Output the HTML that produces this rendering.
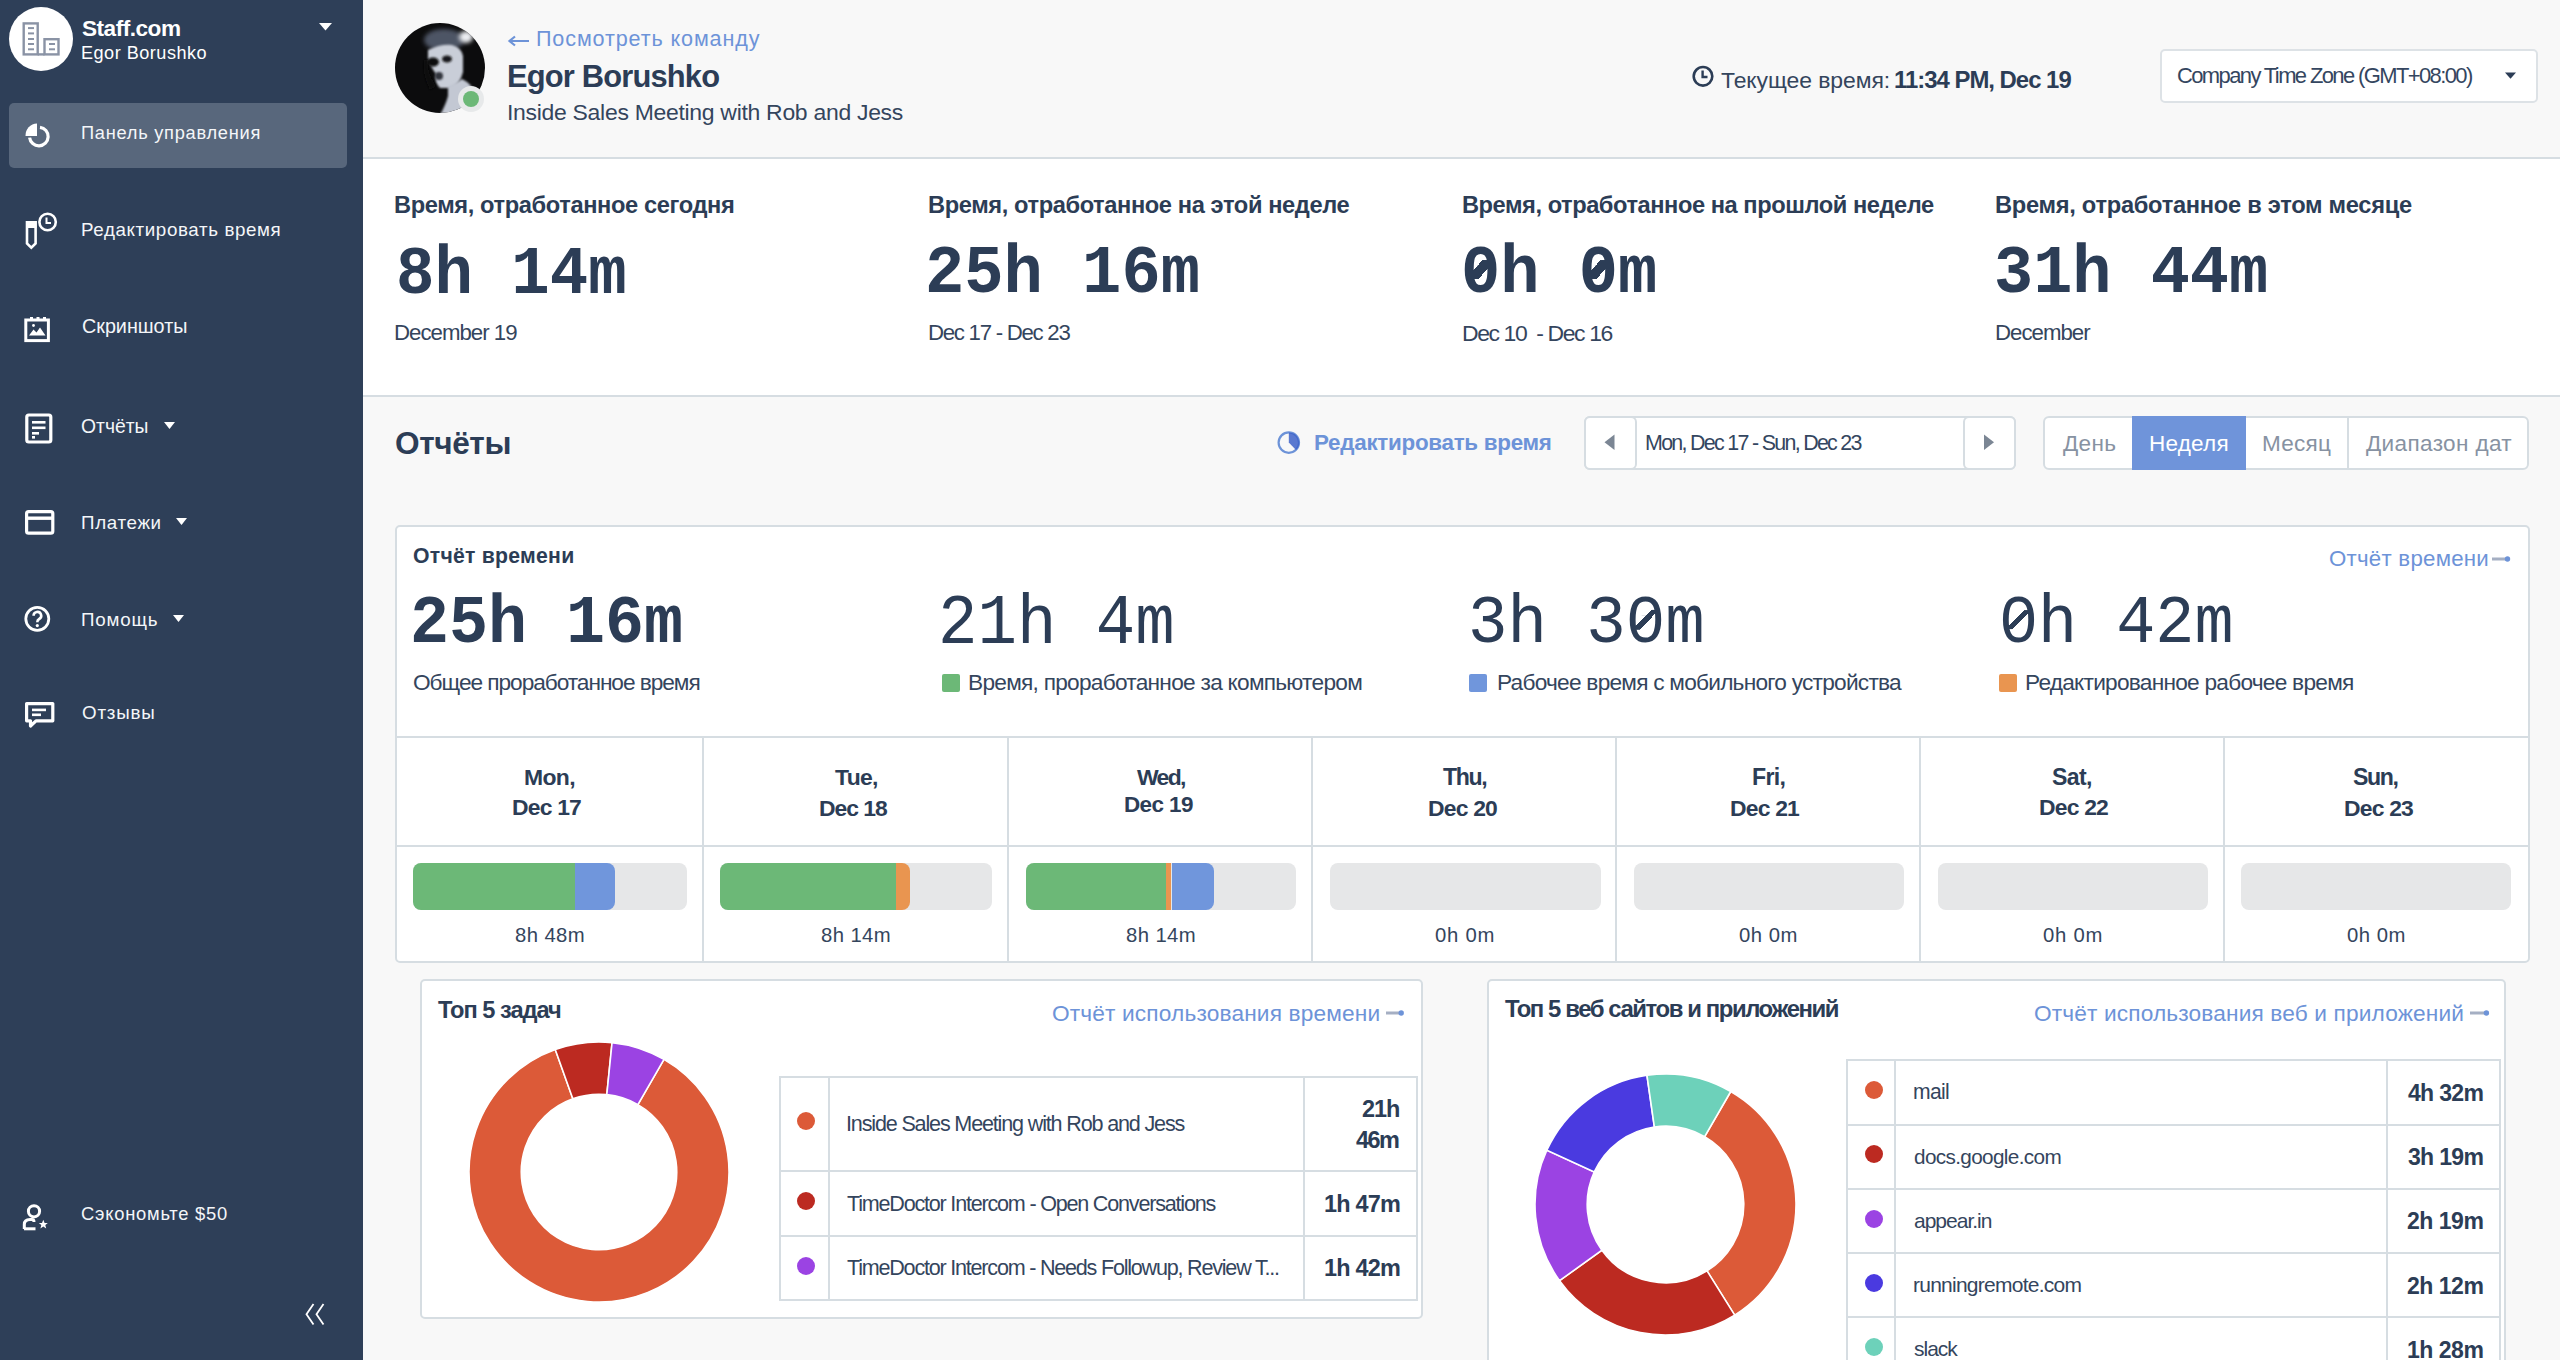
<!DOCTYPE html>
<html><head><meta charset="utf-8">
<style>
*{box-sizing:border-box;margin:0;padding:0}
html,body{width:2560px;height:1360px;overflow:hidden;background:#f8f8f8;font-family:"Liberation Sans",sans-serif;color:#2c3d56}
.a{position:absolute;white-space:nowrap;line-height:1}
.b{font-weight:700}
.mono{font-family:"Liberation Mono",monospace}
#sb{position:absolute;left:0;top:0;width:363px;height:1360px;background:#2e3f58}
.nav{color:#f4f6f9;font-size:18px}
.lnk{color:#6d93d8}
.card{position:absolute;background:#fff;border:2px solid #d6dde2;border-radius:5px}
.big{font-size:64px;transform:scaleY(1.16);transform-origin:0 0;letter-spacing:0}
.z{position:relative;display:inline-block}.z::before{content:"";position:absolute;left:37%;right:37%;top:36%;bottom:45%;background:#fff}.z::after{content:"";position:absolute;left:25%;right:25%;top:29%;bottom:43%;background:linear-gradient(to bottom right,transparent 40%,currentColor 40%,currentColor 60%,transparent 60%)}.b .z::after{left:29%;right:28%;background:linear-gradient(to bottom right,transparent 31%,currentColor 31%,currentColor 69%,transparent 69%)}
.hl{position:absolute;background:#d6dde2}
</style></head><body>
<!-- SIDEBAR -->
<div id="sb">
  <div style="position:absolute;left:9px;top:7px;width:64px;height:64px;border-radius:50%;background:#fff"></div>
  <svg style="position:absolute;left:0;top:0" width="80" height="80" viewBox="0 0 80 80">
    <g fill="none" stroke="#8a93a5" stroke-width="2.4">
      <rect x="23.7" y="23.4" width="14" height="31"/>
      <rect x="44.5" y="39.2" width="14" height="15.2"/>
      <line x1="37.7" y1="54.4" x2="44.5" y2="54.4"/>
    </g>
    <g stroke="#8a93a5" stroke-width="2">
      <line x1="28" y1="28.1" x2="34" y2="28.1"/><line x1="28" y1="33.4" x2="34" y2="33.4"/><line x1="28" y1="39" x2="34" y2="39"/><line x1="28" y1="44" x2="34" y2="44"/><line x1="28" y1="49.3" x2="34" y2="49.3"/>
      <line x1="49" y1="44" x2="55" y2="44"/><line x1="49" y1="49.3" x2="55" y2="49.3"/>
    </g>
  </svg>
  <div class="a b" id="t_staff" style="left:82.00px;top:18.26px;font-size:22.61px;color:#fff;letter-spacing:-0.500px">Staff.com</div>
  <div class="a" id="t_egor" style="left:81.00px;top:44.31px;font-size:18.09px;color:#fff;letter-spacing:0.500px">Egor Borushko</div>
  <svg style="position:absolute;left:319px;top:23px" width="13" height="8"><path d="M0 0H13L6.5 7.5Z" fill="#fff"/></svg>

  <div style="position:absolute;left:9px;top:103px;width:338px;height:65px;border-radius:5px;background:#58677c"></div>
  <!-- dashboard icon -->
  <svg style="position:absolute;left:24px;top:122px" width="28" height="28" viewBox="0 0 28 28">
    <path d="M1.5 14 A 12 12 0 0 1 13 1.5 V 14 Z" fill="#fff"/>
    <path d="M16 5.3 A 9.3 9.3 0 1 1 5.6 15.6" fill="none" stroke="#fff" stroke-width="3.2"/>
  </svg>
  <div class="a nav" id="n1" style="left:81.00px;top:123.81px;font-size:18.23px;letter-spacing:0.746px">Панель управления</div>

  <!-- edit time icon -->
  <svg style="position:absolute;left:22px;top:208px" width="40" height="44" viewBox="0 0 40 44">
    <path d="M5 14.3 H13.6 V35.5 L9.3 39.6 L5 35.5 Z" fill="none" stroke="#fff" stroke-width="2.6"/>
    <rect x="4" y="13" width="10.6" height="7" fill="#fff"/>
    <circle cx="25.6" cy="14" r="8.2" fill="none" stroke="#fff" stroke-width="2.6"/>
    <path d="M24.5 9.5 V15 H29" fill="none" stroke="#fff" stroke-width="2"/>
  </svg>
  <div class="a nav" id="n2" style="left:81.00px;top:220.91px;font-size:18.78px;letter-spacing:0.610px">Редактировать время</div>

  <!-- screenshots icon -->
  <svg style="position:absolute;left:24px;top:316px" width="28" height="28" viewBox="0 0 28 28">
    <rect x="1.8" y="4" width="22.6" height="20.6" fill="none" stroke="#fff" stroke-width="3"/>
    <rect x="6" y="1" width="3" height="4" fill="#fff"/><rect x="12.5" y="1" width="3" height="4" fill="#fff"/><rect x="19" y="1" width="3" height="4" fill="#fff"/>
    <path d="M5 19.5 L9.5 13.5 L12.5 16.5 L16 11.5 L21.5 19.5 Z" fill="#fff"/>
    <circle cx="9.5" cy="9.5" r="1.4" fill="#fff"/>
  </svg>
  <div class="a nav" id="n3" style="left:82.00px;top:317.01px;font-size:19.76px;letter-spacing:-0.010px">Скриншоты</div>

  <!-- reports icon -->
  <svg style="position:absolute;left:24px;top:412px" width="30" height="32" viewBox="0 0 30 32">
    <rect x="2.8" y="3" width="24" height="27" rx="2" fill="none" stroke="#fff" stroke-width="3.2"/>
    <rect x="8" y="9" width="13.5" height="2.6" fill="#fff"/><rect x="8" y="14.5" width="13.5" height="2.6" fill="#fff"/><rect x="8" y="20" width="7" height="2.6" fill="#fff"/><rect x="8" y="24" width="3" height="2.6" fill="#fff"/>
  </svg>
  <div class="a nav" id="n4" style="left:81.00px;top:417.21px;font-size:19.34px;letter-spacing:-0.000px">Отчёты</div>
  <svg style="position:absolute;left:164px;top:422px" width="12" height="8"><path d="M0 0H11L5.5 7Z" fill="#fff"/></svg>

  <!-- payments icon -->
  <svg style="position:absolute;left:24px;top:508px" width="32" height="28" viewBox="0 0 32 28">
    <rect x="2.6" y="3.6" width="26.2" height="21.6" rx="2" fill="none" stroke="#fff" stroke-width="3.2"/>
    <rect x="2.6" y="8.5" width="26.2" height="3.4" fill="#fff"/>
  </svg>
  <div class="a nav" id="n5" style="left:81.00px;top:514.30px;font-size:18.78px;letter-spacing:0.662px">Платежи</div>
  <svg style="position:absolute;left:176px;top:518px" width="12" height="8"><path d="M0 0H11L5.5 7Z" fill="#fff"/></svg>

  <!-- help icon -->
  <svg style="position:absolute;left:23px;top:604px" width="30" height="30" viewBox="0 0 30 30">
    <circle cx="14.3" cy="14.8" r="11.5" fill="none" stroke="#fff" stroke-width="2.8"/>
    <path d="M10.6 11.8 A3.8 3.8 0 1 1 16.2 15 Q14.3 16 14.3 18.3" fill="none" stroke="#fff" stroke-width="2.6"/>
    <circle cx="14.3" cy="21.6" r="1.6" fill="#fff"/>
  </svg>
  <div class="a nav" id="n6" style="left:81.00px;top:611.41px;font-size:18.78px;letter-spacing:0.800px">Помощь</div>
  <svg style="position:absolute;left:173px;top:615px" width="12" height="8"><path d="M0 0H11L5.5 7Z" fill="#fff"/></svg>

  <!-- feedback icon -->
  <svg style="position:absolute;left:24px;top:700px" width="32" height="32" viewBox="0 0 32 32">
    <path d="M2.6 3.6 H28.8 V20.8 H12 L6.5 26 V20.8 H2.6 Z" fill="none" stroke="#fff" stroke-width="3.2" stroke-linejoin="round"/>
    <rect x="8" y="8.6" width="14" height="2.6" fill="#fff"/><rect x="8" y="13.5" width="9" height="2.6" fill="#fff"/>
  </svg>
  <div class="a nav" id="n7" style="left:82.00px;top:703.61px;font-size:18.78px;letter-spacing:0.800px">Отзывы</div>

  <!-- referral -->
  <svg style="position:absolute;left:20px;top:1202px" width="32" height="32" viewBox="0 0 32 32">
    <circle cx="14" cy="9.3" r="5.6" fill="none" stroke="#fff" stroke-width="3"/>
    <path d="M4.3 27 V22.5 Q4.3 17.5 10 17.5 H12 Q14 17.5 14 20" fill="none" stroke="#fff" stroke-width="3"/>
    <line x1="4" y1="26.8" x2="15.5" y2="26.8" stroke="#fff" stroke-width="3"/>
    <path d="M23.3 17.8 L24.6 21 L27.8 21.1 L25.3 23.1 L26.2 26.4 L23.3 24.5 L20.4 26.4 L21.3 23.1 L18.8 21.1 L22 21 Z" fill="#fff"/>
  </svg>
  <div class="a nav" id="n8" style="left:81.00px;top:1205.41px;font-size:18.37px;letter-spacing:0.766px">Сэкономьте $50</div>
  <svg style="position:absolute;left:300px;top:1300px" width="30" height="30" viewBox="0 0 30 30">
    <path d="M13.5 4 L6.5 14.2 L13.5 24.5 M23.5 4 L16.5 14.2 L23.5 24.5" fill="none" stroke="#fff" stroke-width="1.8"/>
  </svg>
</div>

<!-- HEADER -->
<div style="position:absolute;left:363px;top:0;width:2197px;height:157px;background:#f8f8f8"></div>
<div class="hl" style="left:363px;top:157px;width:2197px;height:2px"></div>
<div style="position:absolute;left:363px;top:159px;width:2197px;height:236px;background:#fff"></div>
<div class="hl" style="left:363px;top:395px;width:2197px;height:2px"></div>


<!-- HEADER CONTENT -->
<svg style="position:absolute;left:392px;top:20px" width="110" height="100" viewBox="392 20 110 100">
  <defs><clipPath id="av"><circle cx="440" cy="68" r="45"/></clipPath>
  <filter id="bl2" x="-50%" y="-50%" width="200%" height="200%"><feGaussianBlur stdDeviation="2"/></filter>
  <filter id="bl1" x="-50%" y="-50%" width="200%" height="200%"><feGaussianBlur stdDeviation="1.2"/></filter></defs>
  <circle cx="440" cy="68" r="45" fill="#0c0c0d"/>
  <g clip-path="url(#av)">
    <ellipse cx="444" cy="40" rx="20" ry="11" fill="#4d5465" filter="url(#bl2)"/>
    <path d="M428 50 Q440 44 452 45 Q462 48 463 56 L463 72 Q460 84 452 88 L440 88 Q434 82 436 74 Q430 66 428 58 Z" fill="#c9ced8" filter="url(#bl1)"/>
    <path d="M448 86 Q458 82 462 79 Q472 84 474 92 L474 115 L440 115 Q446 104 448 96 Z" fill="#c3c8d3" filter="url(#bl1)"/>
    <ellipse cx="466" cy="37" rx="7" ry="6" fill="#eceef2" filter="url(#bl2)"/>
    <ellipse cx="433" cy="62" rx="6" ry="4.5" fill="#0c0c0d" filter="url(#bl1)"/>
    <ellipse cx="447" cy="59" rx="5" ry="3.5" fill="#16181d" filter="url(#bl1)"/>
    <ellipse cx="439" cy="76" rx="4" ry="4" fill="#30343d" filter="url(#bl1)"/>
    <path d="M428 60 Q426 72 436 86 L430 90 Q422 74 424 60 Z" fill="#0c0c0d" filter="url(#bl1)"/>
  </g>
  <circle cx="471" cy="99" r="13" fill="#e7e9ea"/>
  <circle cx="471" cy="99" r="8" fill="#6cb877"/>
</svg>
<svg style="position:absolute;left:507px;top:34px" width="24" height="14" viewBox="0 0 24 14"><path d="M22 7H3M8 2.5L2.5 7L8 11.5" fill="none" stroke="#6d93d8" stroke-width="2.2"/></svg>
<div class="a lnk" id="h_back" style="left:536.00px;top:28.30px;font-size:21.57px;letter-spacing:0.875px">Посмотреть команду</div>
<div class="a b" id="h_name" style="left:507.00px;top:62.41px;font-size:30.89px;letter-spacing:-0.834px">Egor Borushko</div>
<div class="a" id="h_task" style="left:507.00px;top:100.90px;font-size:22.96px;letter-spacing:-0.290px;color:#34455d">Inside Sales Meeting with Rob and Jess</div>

<svg style="position:absolute;left:1691px;top:64px" width="25" height="25" viewBox="0 0 25 25"><circle cx="12" cy="12.3" r="9.3" fill="none" stroke="#2c3d56" stroke-width="2.6"/><path d="M11.6 6.5V13H16.5" fill="none" stroke="#2c3d56" stroke-width="2.4"/></svg>
<div class="a" id="h_time1" style="left:1721.00px;top:68.51px;font-size:22.96px;letter-spacing:-0.077px;color:#34455d">Текущее время:</div>
<div class="a b" id="h_time2" style="left:1894.00px;top:67.51px;font-size:23.91px;letter-spacing:-1.001px">11:34 PM, Dec 19</div>

<div style="position:absolute;left:2160px;top:49px;width:378px;height:54px;background:#fff;border:2px solid #dde2e6;border-radius:5px"></div>
<div class="a" id="h_tz" style="left:2177.00px;top:65.30px;font-size:21.98px;color:#344660;letter-spacing:-1.608px">Company Time Zone (GMT+08:00)</div>
<svg style="position:absolute;left:2505px;top:71.5px" width="12" height="8"><path d="M0 0.5H11L5.5 6.8Z" fill="#2c3d56"/></svg>

<!-- STATS -->
<div class="a b" id="s1t" style="left:394.00px;top:194.21px;font-size:23.65px;letter-spacing:-0.384px">Время, отработанное сегодня</div>
<div class="a b" id="s2t" style="left:928.00px;top:194.21px;font-size:23.65px;letter-spacing:-0.394px">Время, отработанное на этой неделе</div>
<div class="a b" id="s3t" style="left:1462.00px;top:194.01px;font-size:23.65px;letter-spacing:-0.448px">Время, отработанное на прошлой неделе</div>
<div class="a b" id="s4t" style="left:1995.00px;top:194.01px;font-size:23.65px;letter-spacing:-0.276px">Время, отработанное в этом месяце</div>
<div class="a mono b big" id="s1n" style="left:396.00px;top:240.40px;font-size:64.04px;transform:scaleY(1.0766);transform-origin:0 0">8h 14m</div>
<div class="a mono b big" id="s2n" style="left:925.00px;top:240.40px;font-size:65.46px;transform:scaleY(1.0524);transform-origin:0 0">25h 16m</div>
<div class="a mono b big" id="s3n" style="left:1461.00px;top:240.40px;font-size:65.35px;transform:scaleY(1.0538);transform-origin:0 0"><span class="z">0</span>h <span class="z">0</span>m</div>
<div class="a mono b big" id="s4n" style="left:1994.00px;top:240.40px;font-size:65.25px;transform:scaleY(1.0566);transform-origin:0 0">31h 44m</div>
<div class="a" id="s1d" style="left:394.00px;top:322.00px;font-size:22.26px;letter-spacing:-1.000px;color:#34455d">December 19</div>
<div class="a" id="s2d" style="left:928.00px;top:322.00px;font-size:22.26px;letter-spacing:-1.286px;color:#34455d">Dec 17 - Dec 23</div>
<div class="a" id="s3d" style="left:1462.00px;top:321.51px;font-size:22.96px;letter-spacing:-1.396px;color:#34455d">Dec 10&nbsp; - Dec 16</div>
<div class="a" id="s4d" style="left:1995.00px;top:322.00px;font-size:22.26px;letter-spacing:-0.996px;color:#34455d">December</div>

<!-- REPORTS TOOLBAR -->
<div class="a b" id="r_title" style="left:395.00px;top:428.01px;font-size:31.58px;letter-spacing:-0.400px">Отчёты</div>
<svg style="position:absolute;left:1276px;top:430px" width="26" height="26" viewBox="0 0 26 26">
  <circle cx="12.8" cy="12.6" r="10.2" fill="none" stroke="#6d93d8" stroke-width="2.2"/>
  <path d="M12.8 2.4 A10.2 10.2 0 0 1 20 20 L12.8 12.6 Z" fill="#3e63c9" opacity="0.85"/>
</svg>
<div class="a b lnk" id="r_edit" style="left:1314.00px;top:432.31px;font-size:22.40px;letter-spacing:-0.279px">Редактировать время</div>

<div style="position:absolute;left:1584px;top:416px;width:432px;height:54px;background:#fff;border:2px solid #d6dde2;border-radius:6px"></div>
<div style="position:absolute;left:1584px;top:416px;width:53px;height:54px;background:#fff;border:2px solid #d6dde2;border-radius:6px"></div>
<div style="position:absolute;left:1963px;top:416px;width:53px;height:54px;background:#fff;border:2px solid #d6dde2;border-radius:6px"></div>
<svg style="position:absolute;left:1604px;top:434px" width="12" height="17"><path d="M10.5 0.5V16L0.5 8.25Z" fill="#7b8694"/></svg>
<svg style="position:absolute;left:1983px;top:434px" width="12" height="17"><path d="M1 0.5V16L11 8.25Z" fill="#7b8694"/></svg>
<div class="a" id="r_date" style="left:1645.00px;top:433.01px;font-size:21.43px;color:#344660;letter-spacing:-1.704px">Mon, Dec 17 - Sun, Dec 23</div>

<div style="position:absolute;left:2043px;top:416px;width:486px;height:54px;background:#fff;border:2px solid #d6dde2;border-radius:6px"></div>
<div style="position:absolute;left:2132px;top:416px;width:114px;height:54px;background:#6f94da"></div>
<div class="hl" style="left:2347px;top:418px;width:2px;height:50px"></div>
<div class="a seg" id="seg1" style="left:2063.00px;top:432.60px;font-size:22.54px;color:#8792a2;letter-spacing:0.332px">День</div>
<div class="a seg" id="seg2" style="left:2149.00px;top:432.60px;font-size:22.54px;color:#fff;letter-spacing:0.200px">Неделя</div>
<div class="a seg" id="seg3" style="left:2262.00px;top:432.60px;font-size:22.54px;color:#8792a2;letter-spacing:0.250px">Месяц</div>
<div class="a seg" id="seg4" style="left:2366.00px;top:432.60px;font-size:22.54px;color:#8792a2;letter-spacing:0.365px">Диапазон дат</div>

<!-- TIME REPORT CARD -->
<div class="card" style="left:395px;top:525px;width:2135px;height:438px"></div>
<div class="a b" id="c_title" style="left:413.00px;top:544.75px;font-size:21.22px;letter-spacing:0.250px">Отчёт времени</div>
<div class="a lnk" id="c_link" style="left:2329.00px;top:548.41px;font-size:22.26px;letter-spacing:0.248px">Отчёт времени</div>
<svg style="position:absolute;left:2490.2px;top:553.5px" width="22.0" height="10"><path d="M2 5H17.0" stroke="#a5afc3" stroke-width="3"/><circle cx="17.5" cy="5" r="2.7" fill="#6d93d8"/></svg>
<div class="a mono b big" id="c1n" style="left:410.00px;top:590.00px;font-size:65.01px;transform:scaleY(1.0595);transform-origin:0 0">25h 16m</div>
<div class="a mono big" id="c2n" style="left:938.00px;top:590.00px;font-size:65.73px;transform:scaleY(1.0669);transform-origin:0 0">21h 4m</div>
<div class="a mono big" id="c3n" style="left:1468.00px;top:590.00px;font-size:65.76px;transform:scaleY(1.0474);transform-origin:0 0">3h 3<span class="z">0</span>m</div>
<div class="a mono big" id="c4n" style="left:1999.00px;top:590.00px;font-size:65.15px;transform:scaleY(1.0567);transform-origin:0 0"><span class="z">0</span>h 42m</div>
<div class="a" id="l1" style="left:413.00px;top:671.30px;font-size:22.68px;letter-spacing:-1.045px;color:#34455d">Общее проработанное время</div>
<div style="position:absolute;left:942px;top:674px;width:18px;height:18px;border-radius:2px;background:#6cb877"></div>
<div class="a" id="l2" style="left:968.00px;top:671.30px;font-size:22.68px;letter-spacing:-0.735px;color:#34455d">Время, проработанное за компьютером</div>
<div style="position:absolute;left:1469px;top:674px;width:18px;height:18px;border-radius:2px;background:#7096dc"></div>
<div class="a" id="l3" style="left:1497.00px;top:671.30px;font-size:22.68px;letter-spacing:-0.758px;color:#34455d">Рабочее время с мобильного устройства</div>
<div style="position:absolute;left:1999px;top:674px;width:18px;height:18px;border-radius:2px;background:#e99550"></div>
<div class="a" id="l4" style="left:2025.00px;top:671.30px;font-size:22.68px;letter-spacing:-0.750px;color:#34455d">Редактированное рабочее время</div>

<!-- days grid -->
<div class="hl" style="left:397px;top:736px;width:2131px;height:2px"></div>
<div class="hl" style="left:397px;top:845px;width:2131px;height:2px"></div>
<div class="hl" style="left:702px;top:738px;width:2px;height:223px"></div>
<div class="hl" style="left:1007px;top:738px;width:2px;height:223px"></div>
<div class="hl" style="left:1311px;top:738px;width:2px;height:223px"></div>
<div class="hl" style="left:1615px;top:738px;width:2px;height:223px"></div>
<div class="hl" style="left:1919px;top:738px;width:2px;height:223px"></div>
<div class="hl" style="left:2223px;top:738px;width:2px;height:223px"></div>
<div class="a b" id="d1a" style="left:524.00px;top:766.11px;font-size:22.96px;letter-spacing:-0.668px">Mon,</div>
<div class="a b" id="d1b" style="left:512.00px;top:795.51px;font-size:22.90px;letter-spacing:-0.800px">Dec 17</div>
<div class="a" id="dv1" style="left:515.00px;top:925.30px;font-size:20.29px;letter-spacing:0.400px;color:#34455d">8h 48m</div>
<div class="a b" id="d2a" style="left:835.00px;top:766.11px;font-size:22.96px;letter-spacing:-0.668px">Tue,</div>
<div class="a b" id="d2b" style="left:819.00px;top:796.60px;font-size:22.90px;letter-spacing:-1.000px">Dec 18</div>
<div class="a" id="dv2" style="left:821.00px;top:925.30px;font-size:20.29px;letter-spacing:0.400px;color:#34455d">8h 14m</div>
<div class="a b" id="d3a" style="left:1137.00px;top:766.11px;font-size:22.96px;letter-spacing:-1.670px">Wed,</div>
<div class="a b" id="d3b" style="left:1124.00px;top:793.50px;font-size:22.46px;letter-spacing:-0.600px">Dec 19</div>
<div class="a" id="dv3" style="left:1126.00px;top:925.30px;font-size:20.29px;letter-spacing:0.400px;color:#34455d">8h 14m</div>
<div class="a b" id="d4a" style="left:1443.00px;top:766.01px;font-size:23.10px;letter-spacing:-1.332px">Thu,</div>
<div class="a b" id="d4b" style="left:1428.00px;top:797.10px;font-size:22.90px;letter-spacing:-0.800px">Dec 20</div>
<div class="a" id="dv4" style="left:1435.00px;top:924.61px;font-size:20.29px;letter-spacing:0.750px;color:#34455d">0h 0m</div>
<div class="a b" id="d5a" style="left:1752.00px;top:766.01px;font-size:23.10px;letter-spacing:-0.665px">Fri,</div>
<div class="a b" id="d5b" style="left:1730.00px;top:797.10px;font-size:22.90px;letter-spacing:-0.800px">Dec 21</div>
<div class="a" id="dv5" style="left:1739.00px;top:924.61px;font-size:20.29px;letter-spacing:0.500px;color:#34455d">0h 0m</div>
<div class="a b" id="d6a" style="left:2052.00px;top:766.01px;font-size:23.10px;letter-spacing:-0.665px">Sat,</div>
<div class="a b" id="d6b" style="left:2039.00px;top:795.60px;font-size:22.90px;letter-spacing:-0.800px">Dec 22</div>
<div class="a" id="dv6" style="left:2043.00px;top:924.61px;font-size:20.29px;letter-spacing:0.750px;color:#34455d">0h 0m</div>
<div class="a b" id="d7a" style="left:2353.00px;top:766.01px;font-size:23.10px;letter-spacing:-1.331px">Sun,</div>
<div class="a b" id="d7b" style="left:2344.00px;top:797.10px;font-size:22.90px;letter-spacing:-0.800px">Dec 23</div>
<div class="a" id="dv7" style="left:2347.00px;top:924.61px;font-size:20.29px;letter-spacing:0.500px;color:#34455d">0h 0m</div>
<div style="position:absolute;left:413px;top:863px;width:274px;height:47px;border-radius:8px;background:#e6e7e8;overflow:hidden"><div style="position:absolute;left:0.0px;top:0;width:161.9px;height:47px;background:#6cb877"></div><div style="position:absolute;left:161.9px;top:0;width:40.1px;height:47px;background:#7096dc;border-radius:0 8px 8px 0"></div></div>
<div style="position:absolute;left:720px;top:863px;width:272px;height:47px;border-radius:8px;background:#e6e7e8;overflow:hidden"><div style="position:absolute;left:0.0px;top:0;width:176.2px;height:47px;background:#6cb877"></div><div style="position:absolute;left:176.2px;top:0;width:13.6px;height:47px;background:#e99550;border-radius:0 8px 8px 0"></div></div>
<div style="position:absolute;left:1026px;top:863px;width:270px;height:47px;border-radius:8px;background:#e6e7e8;overflow:hidden"><div style="position:absolute;left:0.0px;top:0;width:139.6px;height:47px;background:#6cb877"></div><div style="position:absolute;left:139.6px;top:0;width:5.9px;height:47px;background:#e99550"></div><div style="position:absolute;left:145.5px;top:0;width:42.2px;height:47px;background:#7096dc;border-radius:0 8px 8px 0"></div></div>
<div style="position:absolute;left:1330px;top:863px;width:271px;height:47px;border-radius:8px;background:#e6e7e8;overflow:hidden"></div>
<div style="position:absolute;left:1634px;top:863px;width:270px;height:47px;border-radius:8px;background:#e6e7e8;overflow:hidden"></div>
<div style="position:absolute;left:1938px;top:863px;width:270px;height:47px;border-radius:8px;background:#e6e7e8;overflow:hidden"></div>
<div style="position:absolute;left:2241px;top:863px;width:270px;height:47px;border-radius:8px;background:#e6e7e8;overflow:hidden"></div>


<!-- TASKS CARD -->
<div class="card" style="left:420px;top:979px;width:1003px;height:340px"></div>
<div class="a b" id="k_title" style="left:438.00px;top:998.51px;font-size:23.65px;letter-spacing:-1.000px">Топ 5 задач</div>
<div class="a lnk" id="k_link" style="left:1052.00px;top:1001.80px;font-size:22.68px;letter-spacing:0.155px">Отчёт использования времени</div>
<svg style="position:absolute;left:1383.5px;top:1007.8px" width="21.7" height="10"><path d="M2 5H16.7" stroke="#a5afc3" stroke-width="3"/><circle cx="17.2" cy="5" r="2.7" fill="#6d93d8"/></svg>
<svg style="position:absolute;left:464.5px;top:1037.9px" width="268" height="268" viewBox="464.50 1037.90 268.20 268.20"><path d="M663.65 1059.33 A130.1 130.1 0 1 1 554.82 1049.49 L572.42 1098.74 A77.8 77.8 0 1 0 637.50 1104.62 Z" fill="#dc5a38" stroke="#fff" stroke-width="1.6" stroke-linejoin="miter"/><path d="M554.82 1049.49 A130.1 130.1 0 0 1 611.66 1042.56 L606.41 1094.59 A77.8 77.8 0 0 0 572.42 1098.74 Z" fill="#bc2a21" stroke="#fff" stroke-width="1.6" stroke-linejoin="miter"/><path d="M611.66 1042.56 A130.1 130.1 0 0 1 663.65 1059.33 L637.50 1104.62 A77.8 77.8 0 0 0 606.41 1094.59 Z" fill="#9b43e3" stroke="#fff" stroke-width="1.6" stroke-linejoin="miter"/></svg>

<div style="position:absolute;left:779px;top:1076px;width:639px;height:225px;border:2px solid #d6dde2"></div>
<div class="hl" style="left:828px;top:1078px;width:2px;height:221px"></div>
<div class="hl" style="left:1303px;top:1078px;width:2px;height:221px"></div>
<div class="hl" style="left:781px;top:1170px;width:635px;height:2px"></div>
<div class="hl" style="left:781px;top:1235px;width:635px;height:2px"></div>
<div style="position:absolute;left:797px;top:1112px;width:18px;height:18px;border-radius:50%;background:#dc5a38"></div>
<div style="position:absolute;left:797px;top:1192px;width:18px;height:18px;border-radius:50%;background:#bc2a21"></div>
<div style="position:absolute;left:797px;top:1257px;width:18px;height:18px;border-radius:50%;background:#9b43e3"></div>
<div class="a" id="k_r1" style="left:846.00px;top:1112.51px;font-size:21.57px;letter-spacing:-1.163px;color:#34455d">Inside Sales Meeting with Rob and Jess</div>
<div class="a b" id="k_r1a" style="left:1362.00px;top:1098.01px;font-size:23.48px;letter-spacing:-1.000px">21h</div>
<div class="a b" id="k_r1b" style="left:1356.00px;top:1128.51px;font-size:23.48px;letter-spacing:-1.500px">46m</div>
<div class="a" id="k_r2" style="left:847.00px;top:1192.51px;font-size:21.57px;letter-spacing:-1.205px;color:#34455d">TimeDoctor Intercom - Open Conversations</div>
<div class="a b" id="k_r2t" style="left:1324.00px;top:1192.71px;font-size:23.48px;letter-spacing:-0.800px">1h 47m</div>
<div class="a" id="k_r3" style="left:847.00px;top:1256.71px;font-size:21.57px;letter-spacing:-1.215px;color:#34455d">TimeDoctor Intercom - Needs Followup, Review T...</div>
<div class="a b" id="k_r3t" style="left:1324.00px;top:1256.51px;font-size:23.48px;letter-spacing:-0.800px">1h 42m</div>

<!-- SITES CARD -->
<div class="card" style="left:1487px;top:979px;width:1019px;height:400px"></div>
<div class="a b" id="w_title" style="left:1505.00px;top:997.30px;font-size:23.91px;letter-spacing:-1.424px">Топ 5 веб сайтов и приложений</div>
<div class="a lnk" id="w_link" style="left:2034.00px;top:1001.80px;font-size:22.68px;letter-spacing:0.144px">Отчёт использования веб и приложений</div>
<svg style="position:absolute;left:2467.5px;top:1007.5px" width="22.9" height="10"><path d="M2 5H17.9" stroke="#a5afc3" stroke-width="3"/><circle cx="18.4" cy="5" r="2.7" fill="#6d93d8"/></svg>
<svg style="position:absolute;left:1531.4px;top:1069.5px" width="269" height="269" viewBox="1531.40 1069.50 269.00 269.00"><path d="M1731.15 1090.98 A130.5 130.5 0 0 1 1735.10 1314.64 L1707.42 1270.38 A78.3 78.3 0 0 0 1705.05 1136.19 Z" fill="#dc5a38" stroke="#fff" stroke-width="1.6" stroke-linejoin="miter"/><path d="M1735.10 1314.64 A130.5 130.5 0 0 1 1559.94 1280.17 L1602.32 1249.70 A78.3 78.3 0 0 0 1707.42 1270.38 Z" fill="#bc2a21" stroke="#fff" stroke-width="1.6" stroke-linejoin="miter"/><path d="M1559.94 1280.17 A130.5 130.5 0 0 1 1547.22 1149.72 L1594.69 1171.43 A78.3 78.3 0 0 0 1602.32 1249.70 Z" fill="#9b43e3" stroke="#fff" stroke-width="1.6" stroke-linejoin="miter"/><path d="M1547.22 1149.72 A130.5 130.5 0 0 1 1647.36 1074.82 L1654.77 1126.49 A78.3 78.3 0 0 0 1594.69 1171.43 Z" fill="#4a3ae0" stroke="#fff" stroke-width="1.6" stroke-linejoin="miter"/><path d="M1647.36 1074.82 A130.5 130.5 0 0 1 1731.15 1090.98 L1705.05 1136.19 A78.3 78.3 0 0 0 1654.77 1126.49 Z" fill="#6dd1ba" stroke="#fff" stroke-width="1.6" stroke-linejoin="miter"/></svg>

<div style="position:absolute;left:1846px;top:1059px;width:655px;height:330px;border:2px solid #d6dde2"></div>
<div class="hl" style="left:1894px;top:1061px;width:2px;height:310px"></div>
<div class="hl" style="left:2386px;top:1061px;width:2px;height:310px"></div>
<div style="position:absolute;left:1864.5px;top:1081.0px;width:18px;height:18px;border-radius:50%;background:#dc5a38"></div>
<div class="a" id="w_r1" style="left:1913.00px;top:1081.21px;font-size:21.15px;letter-spacing:-0.665px;color:#34455d">mail</div>
<div class="a b" id="w_t1" style="left:2407.90px;top:1081.91px;font-size:23.04px;letter-spacing:-0.680px">4h 32m</div>
<div class="hl" style="left:1848px;top:1124px;width:651px;height:2px"></div>
<div style="position:absolute;left:1864.5px;top:1145.2px;width:18px;height:18px;border-radius:50%;background:#bc2a21"></div>
<div class="a" id="w_r2" style="left:1914.00px;top:1146.81px;font-size:20.73px;letter-spacing:-0.642px;color:#34455d">docs.google.com</div>
<div class="a b" id="w_t2" style="left:2407.90px;top:1146.11px;font-size:23.04px;letter-spacing:-0.680px">3h 19m</div>
<div class="hl" style="left:1848px;top:1188px;width:651px;height:2px"></div>
<div style="position:absolute;left:1864.5px;top:1209.5px;width:18px;height:18px;border-radius:50%;background:#9b43e3"></div>
<div class="a" id="w_r3" style="left:1914.00px;top:1210.00px;font-size:21.01px;letter-spacing:-1.000px;color:#34455d">appear.in</div>
<div class="a b" id="w_t3" style="left:2406.90px;top:1210.31px;font-size:23.04px;letter-spacing:-0.480px">2h 19m</div>
<div class="hl" style="left:1848px;top:1252px;width:651px;height:2px"></div>
<div style="position:absolute;left:1864.5px;top:1273.8px;width:18px;height:18px;border-radius:50%;background:#4a3ae0"></div>
<div class="a" id="w_r4" style="left:1913.00px;top:1274.11px;font-size:21.01px;letter-spacing:-0.752px;color:#34455d">runningremote.com</div>
<div class="a b" id="w_t4" style="left:2406.90px;top:1274.61px;font-size:23.04px;letter-spacing:-0.480px">2h 12m</div>
<div class="hl" style="left:1848px;top:1316px;width:651px;height:2px"></div>
<div style="position:absolute;left:1864.5px;top:1338.0px;width:18px;height:18px;border-radius:50%;background:#6dd1ba"></div>
<div class="a" id="w_r5" style="left:1914.00px;top:1337.71px;font-size:21.01px;letter-spacing:-1.000px;color:#34455d">slack</div>
<div class="a b" id="w_t5" style="left:2406.90px;top:1338.91px;font-size:23.04px;letter-spacing:-0.480px">1h 28m</div>

</body></html>
